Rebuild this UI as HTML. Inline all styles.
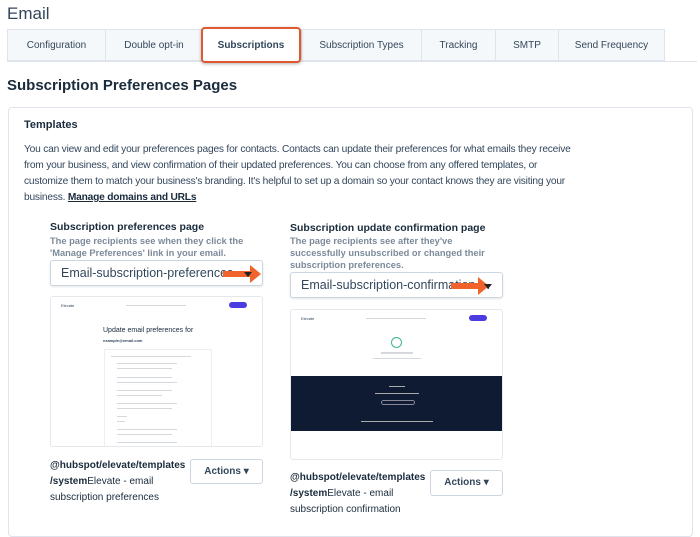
<!DOCTYPE html>
<html><head><style>
*{box-sizing:border-box;margin:0;padding:0}
body{width:700px;height:519px;overflow:hidden;background:#fff;font-family:"Liberation Sans",sans-serif;color:#33475b;position:relative}
.a{position:absolute}
.tab{position:absolute;top:29px;height:32px;background:#f5f8fa;border:1px solid #dfe3eb;border-right:none;font-size:10px;color:#33475b;text-align:center;line-height:31px}
.sel{background:#fff;border:2px solid #e0582f;border-radius:4px;font-weight:bold;box-shadow:0 1px 3px rgba(0,0,0,.3);top:27px;height:36px;line-height:33px;z-index:2}
.h{font-size:10.5px;font-weight:bold;color:#1a2b3c}
.d{font-size:9.3px;font-weight:bold;color:#7c8a99;line-height:12px}
.dd{position:absolute;border:1px solid #cbd6e2;border-radius:3px;height:26px;font-size:12.5px;color:#33475b;padding-left:10px;line-height:25px;background:#fff;box-shadow:0 1px 2px rgba(0,0,0,.1);white-space:nowrap}
.dd:after{content:"";position:absolute;right:10px;top:11px;border:4px solid transparent;border-top:5px solid #222}
.arr{position:absolute;width:28px;height:6px;background:#f0632c;top:10px}
.arr:after{content:"";position:absolute;right:-10px;top:-6px;border:9px solid transparent;border-left:11px solid #f0632c;border-right:none}
.pv{position:absolute;border:1px solid #e5e8ec;border-radius:3px;background:#fff;overflow:hidden}
.btn{position:absolute;border:1px solid #cbd6e2;border-radius:3px;font-size:10px;font-weight:bold;text-align:center;line-height:23px;background:#fff}
.path{position:absolute;font-size:10px;line-height:16px;color:#1a2b3c}
.ln{position:absolute;height:2px;background:#d5d9de}
</style></head><body>
<div class="a" style="left:7px;top:4px;font-size:17px;color:#33475b">Email</div>
<div class="a" style="left:7px;top:61px;width:690px;height:1px;background:#dfe3eb"></div>
<div class="tab" style="left:7px;width:98px">Configuration</div>
<div class="tab" style="left:105px;width:97px">Double opt-in</div>
<div class="tab sel" style="left:201px;width:100px">Subscriptions</div>
<div class="tab" style="left:301px;width:120px">Subscription Types</div>
<div class="tab" style="left:421px;width:74px">Tracking</div>
<div class="tab" style="left:495px;width:63px">SMTP</div>
<div class="tab" style="left:558px;width:107px;border-right:1px solid #dfe3eb">Send Frequency</div>
<div class="a" style="left:7px;top:77px;font-size:15px;font-weight:bold;color:#1a2b3c">Subscription Preferences Pages</div>
<div class="a" style="left:8px;top:107px;width:685px;height:430px;border:1px solid #dfe3eb;border-radius:4px"></div>
<div class="a" style="left:24px;top:119px;font-size:11px;font-weight:bold;color:#1a2b3c">Templates</div>
<div class="a" style="left:24px;top:142px;width:551px;font-size:10.2px;letter-spacing:-0.2px;line-height:16px;color:#33475b">You can view and edit your preferences pages for contacts. Contacts can update their preferences for what emails they receive from your business, and view confirmation of their updated preferences. You can choose from any offered templates, or customize them to match your business's branding. It's helpful to set up a domain so your contact knows they are visiting your business. <b style="color:#1a2b3c;text-decoration:underline">Manage domains and URLs</b></div>

<div class="a h" style="left:50px;top:221px">Subscription preferences page</div>
<div class="a d" style="left:50px;top:235px;width:225px">The page recipients see when they click the 'Manage Preferences' link in your email.</div>
<div class="dd" style="left:50px;top:260px;width:213px;overflow:hidden">Email-subscription-preferences-...<div class="arr" style="left:172px"></div></div>
<div class="pv" style="left:50px;top:296px;width:213px;height:151px">
 <div class="a" style="left:10px;top:6px;font-size:4px">Elevate</div>
 <div class="ln" style="left:75px;top:8px;width:60px;height:1px"></div>
 <div class="a" style="left:178px;top:5px;width:18px;height:6px;background:#4a3ce0;border-radius:4px"></div>
 <div class="a" style="left:52px;top:30px;font-size:7px;color:#1a2b3c">Update email preferences for</div>
 <div class="a" style="left:52px;top:41px;font-size:4px;font-weight:bold">example@email.com</div>
 <div class="a" style="left:53px;top:52px;width:108px;height:100px;border:1px solid #eee">
  <div class="ln" style="left:6px;top:6px;width:80px;height:1px"></div>
  <div class="ln" style="left:12px;top:13px;width:60px;height:1px"></div><div class="ln" style="left:12px;top:18px;width:55px;height:1px"></div>
  <div class="ln" style="left:12px;top:27px;width:55px;height:1px"></div><div class="ln" style="left:12px;top:32px;width:60px;height:1px"></div>
  <div class="ln" style="left:12px;top:40px;width:55px;height:1px"></div><div class="ln" style="left:12px;top:45px;width:45px;height:1px"></div>
  <div class="ln" style="left:12px;top:53px;width:60px;height:1px"></div><div class="ln" style="left:12px;top:58px;width:55px;height:1px"></div>
  <div class="ln" style="left:12px;top:66px;width:10px;height:1px"></div><div class="ln" style="left:12px;top:71px;width:8px;height:1px"></div>
  <div class="ln" style="left:12px;top:79px;width:60px;height:1px"></div><div class="ln" style="left:12px;top:84px;width:55px;height:1px"></div>
  <div class="ln" style="left:12px;top:92px;width:60px;height:1px"></div>
 </div>
</div>
<div class="path" style="left:50px;top:458px"><b>@hubspot/elevate/templates<br>/system</b>Elevate - email<br>subscription preferences</div>
<div class="btn" style="left:190px;top:459px;width:73px;height:25px">Actions ▾</div>

<div class="a h" style="left:290px;top:222px">Subscription update confirmation page</div>
<div class="a d" style="left:290px;top:235px;width:215px">The page recipients see after they've successfully unsubscribed or changed their subscription preferences.</div>
<div class="dd" style="left:290px;top:272px;width:213px;overflow:hidden">Email-subscription-confirmation-...<div class="arr" style="left:160px"></div></div>
<div class="pv" style="left:290px;top:309px;width:213px;height:151px">
 <div class="a" style="left:10px;top:6px;font-size:4px">Elevate</div>
 <div class="ln" style="left:75px;top:8px;width:60px;height:1px"></div>
 <div class="a" style="left:178px;top:5px;width:18px;height:6px;background:#4a3ce0;border-radius:4px"></div>
 <div class="a" style="left:100px;top:27px;width:11px;height:11px;border:1px solid #3bb58f;border-radius:50%"></div>
 <div class="ln" style="left:90px;top:42px;width:32px"></div>
 <div class="ln" style="left:82px;top:48px;width:48px;height:1px"></div>
 <div class="a" style="left:0;top:66px;width:213px;height:55px;background:#0f1a33">
  <div class="ln" style="left:98px;top:10px;width:16px;height:1px;background:#aaa"></div>
  <div class="ln" style="left:84px;top:17px;width:44px;height:1px;background:#aaa"></div>
  <div class="a" style="left:90px;top:24px;width:34px;height:5px;border:1px solid #889;border-radius:3px"></div>
  <div class="ln" style="left:70px;top:45px;width:72px;height:1px;background:#aaa"></div>
 </div>
</div>
<div class="path" style="left:290px;top:470px"><b>@hubspot/elevate/templates<br>/system</b>Elevate - email<br>subscription confirmation</div>
<div class="btn" style="left:430px;top:470px;width:73px;height:26px">Actions ▾</div>
</body></html>
